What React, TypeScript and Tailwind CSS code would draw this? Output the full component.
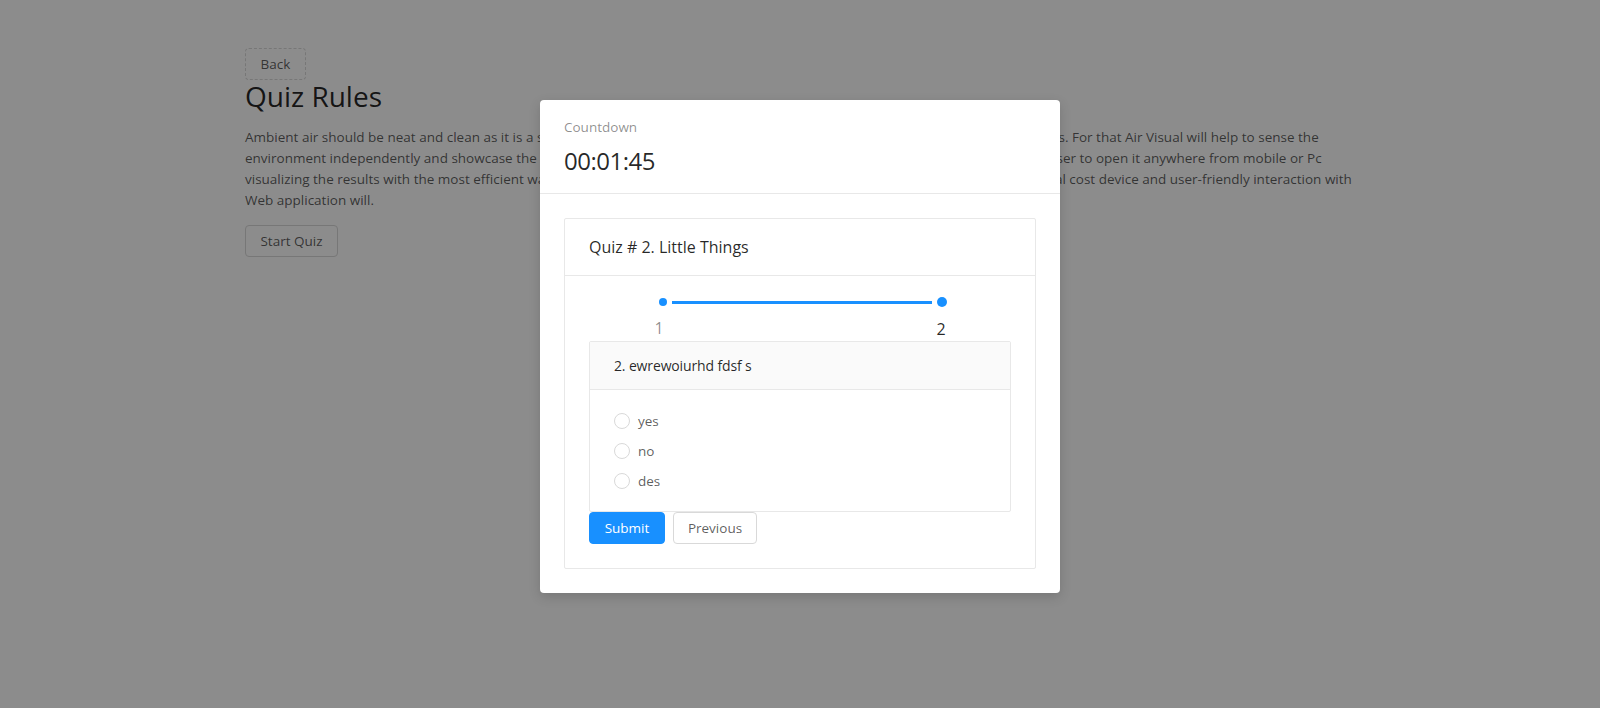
import React from "react";

const font = { fontFamily: '"Open Sans", "Noto Sans", sans-serif' };

function Radio({ label }: { label: string }) {
  return (
    <div className="flex h-[22px] items-center">
      <span className="box-border h-4 w-4 rounded-full border border-[#d9d9d9] bg-white" />
      <span className="ml-2 text-[13.5px] text-[rgba(0,0,0,0.65)]">{label}</span>
    </div>
  );
}

export default function App() {
  return (
    <div className="relative h-[708px] w-full overflow-hidden bg-white" style={font}>
      {/* page */}
      <div className="px-[245px] pt-[48px] text-[13.5px] text-[rgba(0,0,0,0.65)]">
        <button className="box-border h-8 w-[61px] rounded-[4px] border border-dashed border-[#d9d9d9] bg-white text-[13.5px] text-[rgba(0,0,0,0.65)]">
          Back
        </button>
        <h2 className="mt-[-4px] text-[28px] font-medium leading-[40px] text-[rgba(0,0,0,0.85)]">
          Quiz Rules
        </h2>
        <p className="mt-[11px] whitespace-nowrap text-[13.5px] leading-[21px]">
          Ambient air should be neat and clean as it is a significant aspect of life and it is directly linked with the health of all the living beings. For that Air Visual will help to sense the
          <br />
          environment independently and showcase the results on a web application in real time which makes it easy and smooth for the user to open it anywhere from mobile or Pc
          <br />
          visualizing the results with the most efficient way. The main purpose of this project is to provide environment sensing with minimal cost device and user-friendly interaction with
          <br />
          Web application will.
        </p>
        <button className="mt-[14px] box-border h-8 w-[93px] rounded-[4px] border border-[#d9d9d9] bg-white text-[13.5px] text-[rgba(0,0,0,0.65)]">
          Start Quiz
        </button>
      </div>

      {/* overlay */}
      <div className="absolute inset-0 bg-[rgba(0,0,0,0.45)]" />

      {/* modal */}
      <div className="absolute left-[540px] top-[100px] w-[520px] rounded-[4px] bg-white shadow-[0_4px_12px_rgba(0,0,0,0.15)]">
        <div className="border-b border-[#e8e8e8] px-6 pb-[13px] pt-4">
          <div className="mb-1 text-[13.5px] leading-[22px] text-[rgba(0,0,0,0.45)]">Countdown</div>
          <div className="text-[24px] leading-[38px] tracking-[-0.02em] text-[rgba(0,0,0,0.85)]">00:01:45</div>
        </div>
        <div className="p-6">
          <div className="rounded-[2px] border border-[#e8e8e8]">
            <div className="flex h-[57px] items-center border-b border-[#e8e8e8] px-6 text-base font-medium text-[rgba(0,0,0,0.85)]">
              Quiz # 2. Little Things
            </div>
            <div className="px-6 pb-6 pt-[21px]">
              {/* steps */}
              <div className="flex h-[10px] items-center pl-[70px] pr-[64px]">
                <span className="h-2 w-2 rounded-full bg-[#1890ff]" />
                <span className="ml-[5px] h-[3px] flex-1 bg-[#1890ff]" />
                <span className="ml-[5px] h-[10px] w-[10px] rounded-full bg-[#1890ff]" />
              </div>
              <div className="mt-[9px] flex h-6 text-base leading-6">
                <div className="w-[140px] text-center text-[rgba(0,0,0,0.45)]">1</div>
                <div className="flex-1" />
                <div className="mt-[1px] w-[140px] text-center text-[rgba(0,0,0,0.85)]">2</div>
              </div>
              {/* inner card */}
              <div className="mt-[1px] rounded-[2px] border border-[#e8e8e8]">
                <div className="flex h-[48px] items-center border-b border-[#e8e8e8] bg-[#fafafa] px-6 text-sm font-medium tracking-[-0.01em] text-[rgba(0,0,0,0.85)]">
                  2. ewrewoiurhd fdsf s
                </div>
                <div className="flex flex-col gap-2 px-6 pb-[19px] pt-5">
                  <Radio label="yes" />
                  <Radio label="no" />
                  <Radio label="des" />
                </div>
              </div>
              <div className="flex gap-2">
                <button className="box-border h-8 w-[76px] rounded-[4px] border border-[#1890ff] bg-[#1890ff] text-[13.5px] text-white">
                  Submit
                </button>
                <button className="box-border h-8 w-[84px] rounded-[4px] border border-[#d9d9d9] bg-white text-[13.5px] text-[rgba(0,0,0,0.65)]">
                  Previous
                </button>
              </div>
            </div>
          </div>
        </div>
      </div>
    </div>
  );
}
